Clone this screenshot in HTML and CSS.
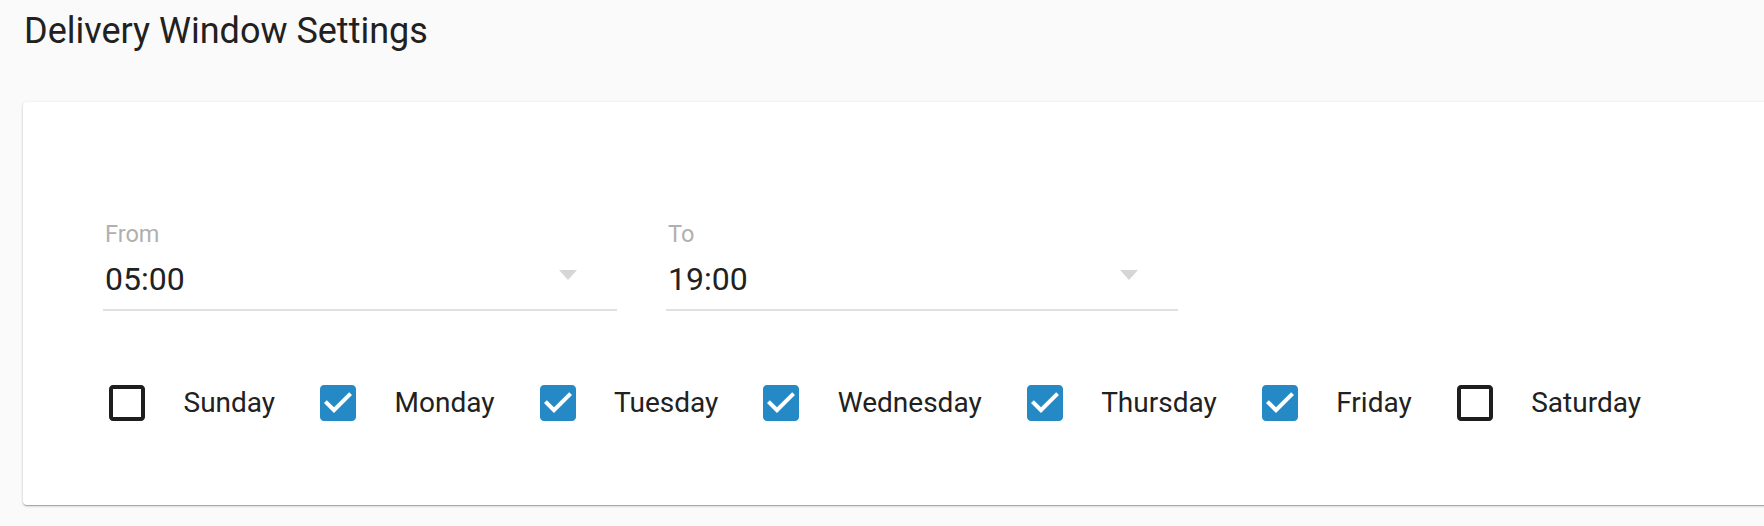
FILE: index.html
```html
<!doctype html>
<html lang="en">
<head>
<meta charset="utf-8">
<title>Delivery Window Settings</title>
<meta name="viewport" content="width=device-width,initial-scale=1">
<link rel="stylesheet" href="styles.css">
</head>
<body>

<h1 class="title">Delivery Window Settings</h1>

<div class="card">
  <!-- time range -->
  <div class="fields">
    <div class="field">
      <label class="field-label">From</label>
      <div class="field-input">
        <span class="field-value">05:00</span>
        <span class="caret"></span>
      </div>
    </div>
    <div class="field">
      <label class="field-label">To</label>
      <div class="field-input">
        <span class="field-value">19:00</span>
        <span class="caret"></span>
      </div>
    </div>
  </div>

  <!-- week days -->
  <div class="days">
    <label class="day">
      <svg class="box" viewBox="0 0 24 24"><path d="M19 5v14H5V5h14m0-2H5c-1.1 0-2 .9-2 2v14c0 1.1.9 2 2 2h14c1.1 0 2-.9 2-2V5c0-1.1-.9-2-2-2z"/></svg>
      <span>Sunday</span>
    </label>
    <label class="day on">
      <svg class="box" viewBox="0 0 24 24"><path d="M19 3H5c-1.11 0-2 .9-2 2v14c0 1.1.89 2 2 2h14c1.11 0 2-.9 2-2V5c0-1.1-.89-2-2-2zm-9 14l-5-5 1.41-1.41L10 14.17l7.59-7.59L19 8l-9 9z"/></svg>
      <span>Monday</span>
    </label>
    <label class="day on">
      <svg class="box" viewBox="0 0 24 24"><path d="M19 3H5c-1.11 0-2 .9-2 2v14c0 1.1.89 2 2 2h14c1.11 0 2-.9 2-2V5c0-1.1-.89-2-2-2zm-9 14l-5-5 1.41-1.41L10 14.17l7.59-7.59L19 8l-9 9z"/></svg>
      <span>Tuesday</span>
    </label>
    <label class="day on">
      <svg class="box" viewBox="0 0 24 24"><path d="M19 3H5c-1.11 0-2 .9-2 2v14c0 1.1.89 2 2 2h14c1.11 0 2-.9 2-2V5c0-1.1-.89-2-2-2zm-9 14l-5-5 1.41-1.41L10 14.17l7.59-7.59L19 8l-9 9z"/></svg>
      <span>Wednesday</span>
    </label>
    <label class="day on">
      <svg class="box" viewBox="0 0 24 24"><path d="M19 3H5c-1.11 0-2 .9-2 2v14c0 1.1.89 2 2 2h14c1.11 0 2-.9 2-2V5c0-1.1-.89-2-2-2zm-9 14l-5-5 1.41-1.41L10 14.17l7.59-7.59L19 8l-9 9z"/></svg>
      <span>Thursday</span>
    </label>
    <label class="day on">
      <svg class="box" viewBox="0 0 24 24"><path d="M19 3H5c-1.11 0-2 .9-2 2v14c0 1.1.89 2 2 2h14c1.11 0 2-.9 2-2V5c0-1.1-.89-2-2-2zm-9 14l-5-5 1.41-1.41L10 14.17l7.59-7.59L19 8l-9 9z"/></svg>
      <span>Friday</span>
    </label>
    <label class="day">
      <svg class="box" viewBox="0 0 24 24"><path d="M19 5v14H5V5h14m0-2H5c-1.1 0-2 .9-2 2v14c0 1.1.9 2 2 2h14c1.1 0 2-.9 2-2V5c0-1.1-.9-2-2-2z"/></svg>
      <span>Saturday</span>
    </label>
  </div>
</div>

</body>
</html>
```

FILE: styles.css
```css
*{box-sizing:border-box;margin:0;padding:0}
html,body{
  height:100%;
  font-family:Roboto,"Helvetica Neue",Arial,sans-serif;
  background:#fafafa;
  color:#212121;
  overflow:hidden;
}
body{padding:0 0 0 23px}

/* page heading */
.title{
  font-size:36px;
  font-weight:400;
  line-height:42px;
  margin:10px 0 50px 1px;
}

/* card, runs off the right edge */
.card{
  background:#fff;
  border-radius:4px;
  margin-right:-40px;
  padding:120px 0 78px 80px;
  box-shadow:0 1px 3px rgba(0,0,0,.2),0 1px 1px rgba(0,0,0,.14),0 2px 1px -1px rgba(0,0,0,.12);
}

/* ---------- selects ---------- */
.fields{display:flex;gap:49px}
.field{width:514px}
.field + .field{width:512px}
.field-label{
  display:block;
  font-size:23.5px;
  line-height:24px;
  color:#b0b0b0;
  padding-left:2px;
}
.field-input{
  display:flex;
  justify-content:space-between;
  margin-top:14px;
  padding:0 40px 11px 2px;
  border-bottom:2px solid #e0e0e0;
}
.field-value{font-size:32px;line-height:38px}
.caret{
  width:0;height:0;
  margin-top:10px;
  border-left:9.5px solid transparent;
  border-right:9.5px solid transparent;
  border-top:10px solid #d6d6d6;
}

/* ---------- checkboxes ---------- */
.days{display:flex;align-items:center;margin-top:68px}
.day{
  display:flex;
  align-items:center;
  margin-right:39px;
  font-size:28px;
  line-height:34px;
}
.box{width:48px;height:48px;margin-right:32.5px;fill:#1e1e1e}
.day.on .box{fill:#2589c5}
```
